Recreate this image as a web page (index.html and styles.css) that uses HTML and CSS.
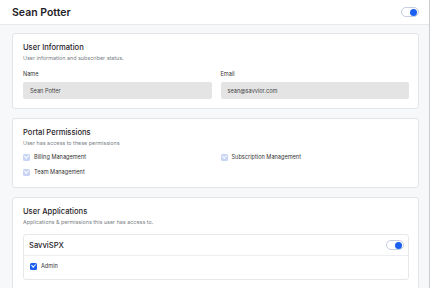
FILE: index.html
```html
<!DOCTYPE html>
<html lang="en">
<head>
  <meta charset="UTF-8" />
  <title>Sean Potter</title>
  <link rel="stylesheet" href="styles.css">
</head>
<body>
  <div class="app">
    <header class="topbar">
      <h1>Sean Potter</h1>
      <span class="toggle on"><span class="knob"></span></span>
    </header>

    <main class="content">
      <section class="card">
        <h2>User Information</h2>
        <p class="sub">User information and subscriber status.</p>
        <div class="grid">
          <label class="field">
            <span class="label">Name</span>
            <span class="input">Sean Potter</span>
          </label>
          <label class="field">
            <span class="label">Email</span>
            <span class="input">sean@savvior.com</span>
          </label>
        </div>
      </section>

      <section class="card perms-card">
        <h2>Portal Permissions</h2>
        <p class="sub">User has access to these permissions</p>
        <div class="grid perms">
          <div class="check"><span class="box muted"></span>Billing Management</div>
          <div class="check"><span class="box muted"></span>Subscription Management</div>
          <div class="check"><span class="box muted"></span>Team Management</div>
        </div>
      </section>

      <section class="card">
        <h2>User Applications</h2>
        <p class="sub">Applications &amp; permissions this user has access to.</p>
        <div class="app-box">
          <div class="app-head">
            <span class="app-name">SavviSPX</span>
            <span class="toggle on"><span class="knob"></span></span>
          </div>
          <div class="app-body">
            <div class="check"><span class="box active"></span>Admin</div>
          </div>
        </div>
      </section>
    </main>
  </div>
</body>
</html>
```

FILE: styles.css
```css
* {
  box-sizing: border-box;
}
html, body {
  margin: 0;
  height: 100%;
  overflow: hidden;
}
body {
  font-family: Inter, "Noto Sans", sans-serif;
  background: #fff;
  color: #1f2328;
}
.app {
  width: 430px;
  height: 100%;
  background: #f7f8fa;
  border-right: 1px solid #c9ccd1;
}
.topbar {
  height: 25px;
  background: #fff;
  border-bottom: 1px solid #e6e8eb;
  display: flex;
  align-items: center;
  justify-content: space-between;
  padding: 0 10px 0 12px;
}
.topbar h1 {
  margin: 0;
  font-size: 10.5px;
  font-weight: 600;
}
.toggle {
  width: 18px;
  height: 10px;
  border-radius: 6px;
  border: 1px solid #c5cde0;
  background: #fff;
  display: flex;
  align-items: center;
  justify-content: flex-end;
  padding: 1px;
}
.toggle .knob {
  width: 7px;
  height: 7px;
  border-radius: 50%;
  background: #1a5ff0;
}
.content {
  padding: 8px 10px 8px 12px;
  display: flex;
  flex-direction: column;
  gap: 9px;
}
.card {
  background: #fff;
  border: 1px solid #e3e5e8;
  border-radius: 3px;
  padding: 9px 9px 9px 10px;
}
.card h2 {
  margin: 0;
  font-size: 7.6px;
  font-weight: 500;
  line-height: 10px;
}
.sub {
  margin: 1px 0 0;
  font-size: 5.4px;
  color: #7a7f87;
  line-height: 8px;
}
.grid {
  display: grid;
  grid-template-columns: 1fr 1fr;
  column-gap: 9px;
  margin-top: 8px;
}
.field {
  display: flex;
  flex-direction: column;
}
.label {
  font-size: 5.6px;
  line-height: 8px;
  color: #333;
}
.input {
  margin-top: 4px;
  height: 17px;
  background: #e4e4e4;
  border-radius: 2px;
  padding: 0 7px;
  display: flex;
  align-items: center;
  font-size: 5.6px;
  color: #444;
}
.perms-card {
  padding-bottom: 11px;
}
.perms {
  margin-top: 6px;
  row-gap: 7px;
}
.check {
  display: flex;
  align-items: center;
  gap: 4px;
  font-size: 5.6px;
  color: #333;
  line-height: 8px;
}
.box {
  width: 7px;
  height: 7px;
  border-radius: 1.5px;
  position: relative;
}
.box::after {
  content: "";
  position: absolute;
  left: 2.3px;
  top: 0.8px;
  width: 1.6px;
  height: 3.4px;
  border: solid #fff;
  border-width: 0 1px 1px 0;
  transform: rotate(45deg);
}
.box.muted {
  background: #c9d5f5;
}
.box.active {
  background: #1a5ff0;
}
.app-box {
  margin-top: 8px;
  border: 1px solid #e6e8eb;
  border-radius: 3px;
}
.app-head {
  display: flex;
  align-items: center;
  justify-content: space-between;
  padding: 4px 4px 4px 5px;
  border-bottom: 1px solid #eceef1;
  height: 21px;
}
.app-name {
  font-size: 7.6px;
  font-weight: 500;
}
.app-body {
  padding: 6px 6px 9px;
}
```
